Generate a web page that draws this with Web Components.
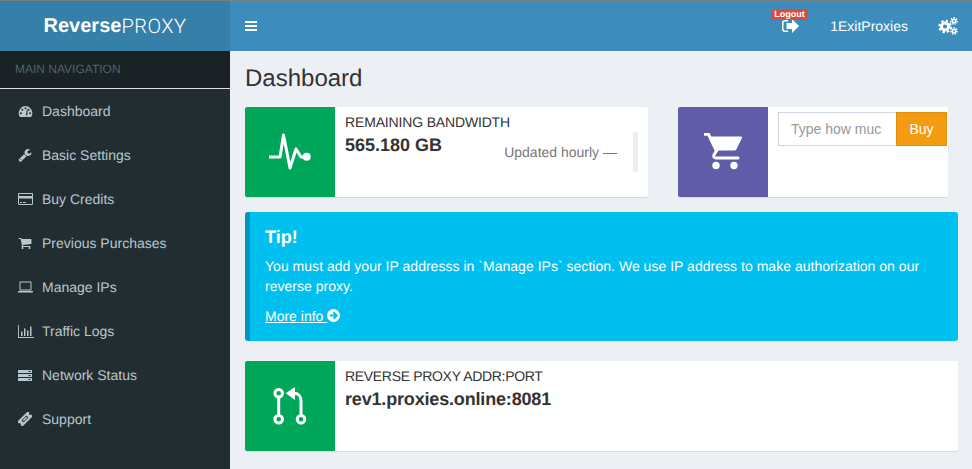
<!DOCTYPE html>
<html lang="en"><head><meta charset="utf-8"><title>ReverseProxy</title>
<style>
html,body{margin:0;height:100%;overflow:hidden;background:#ecf0f5}
body{font:14px/20px "Liberation Sans",Arial,sans-serif;color:#333;text-rendering:geometricPrecision}
</style></head><body>
<x-app>
  <x-top slot="top"></x-top>
  <x-sidebar slot="side">
    <x-nav icon="dashboard">Dashboard</x-nav>
    <x-nav icon="wrench">Basic Settings</x-nav>
    <x-nav icon="card">Buy Credits</x-nav>
    <x-nav icon="cart">Previous Purchases</x-nav>
    <x-nav icon="laptop">Manage IPs</x-nav>
    <x-nav icon="bars">Traffic Logs</x-nav>
    <x-nav icon="server">Network Status</x-nav>
    <x-nav icon="ticket">Support</x-nav>
  </x-sidebar>
  <x-dash></x-dash>
</x-app>
<script>
const ICONS={
dashboard:`<svg viewBox="0 0 16 14" width="15" height="13"><path fill="currentColor" fill-rule="evenodd" d="M8 1.200a7.400 7.400 0 0 0-7.400 7.400c0 1.500.4 2.900 1.200 4 .2.200.4.400.7.400h11c.3 0 .5-.2.7-.4.8-1.100 1.200-2.500 1.200-4A7.400 7.400 0 0 0 8 1.200ZM3 10a1.100 1.100 0 1 1 0-2.200A1.100 1.100 0 0 1 3 10Zm1.600-3.700a1.100 1.100 0 1 1 0-2.200 1.100 1.100 0 0 1 0 2.200ZM8 4.600a1.100 1.100 0 1 1 0-2.200 1.100 1.100 0 0 1 0 2.200Zm2 6.200-1.400.4-.1-.1.900-5.400.7-.9.3.2-.1 1.100Zm1.400-4.500a1.100 1.100 0 1 1 0-2.200 1.100 1.100 0 0 1 0 2.200Zm1.600 3.700a1.100 1.100 0 1 1 0-2.200 1.100 1.100 0 0 1 0 2.200Z"/></svg>`,
wrench:`<svg viewBox="0 0 1792 1792" width="14" height="14"><path fill="currentColor" d="M448 1472q0-26-19-45t-45-19-45 19-19 45 19 45 45 19 45-19 19-45zm644-420l-682 682q-37 37-90 37-52 0-91-37l-106-108q-38-36-38-90 0-53 38-91l681-681q39 98 114.500 173.500t173.500 114.500zm634-435q0 39-23 106-47 134-164.500 217.500t-258.500 83.500q-185 0-316.500-131.500t-131.500-316.500 131.500-316.500 316.500-131.500q58 0 121.500 16.500t107.500 46.500q16 11 16 28t-16 28l-293 169v224l193 107q5-3 79-48.500t135.500-81 70.500-35.500q15 0 23.500 10t8.500 25z"/></svg>`,
card:`<svg viewBox="0 0 15 12" width="15" height="12"><path fill="currentColor" fill-rule="evenodd" d="M1.200 0h12.600c.7 0 1.200.5 1.200 1.200v9.600c0 .7-.5 1.200-1.200 1.200H1.200C.5 12 0 11.500 0 10.800V1.200C0 .5.500 0 1.200 0ZM1 1.200V3h13V1.200c0-.1-.1-.2-.2-.2H1.200c-.1 0-.2.100-.2.200ZM1 5.500v5.300c0 .1.100.2.200.2h12.600c.1 0 .2-.1.200-.2V5.500ZM2 9h2v1H2Zm3 0h3v1H5Z"/></svg>`,
cart:`<svg viewBox="0 0 1792 1792" width="14" height="14"><path fill="currentColor" d="M704 1536q0 52-38 90t-90 38-90-38-38-90 38-90 90-38 90 38 38 90zm896 0q0 52-38 90t-90 38-90-38-38-90 38-90 90-38 90 38 38 90zm128-1088v512q0 24-16.500 42.500t-40.500 21.500l-1044 122q13 60 13 70 0 16-24 64h920q26 0 45 19t19 45-19 45-45 19h-1024q-26 0-45-19t-19-45q0-11 8-31.500t16-36 21.500-40 15.500-29.500l-177-823h-204q-26 0-45-19t-19-45 19-45 45-19h256q16 0 28.500 6.500t19.500 15.500 13 24.500 8 26 5.500 29.500 4.500 26h1201q26 0 45 19t19 45z"/></svg>`,
laptop:`<svg viewBox="0 0 15 12" width="15" height="12"><path fill="currentColor" fill-rule="evenodd" d="M2.500 0.500h10c.6 0 1 .4 1 1v7c0 .6-.4 1-1 1h-10c-.6 0-1-.4-1-1v-7c0-.6.400-1 1-1Zm0 1v7h10v-7ZM0 10h15v.7c0 .5-.4.800-.8.800H.8c-.4 0-.8-.3-.8-.8Z"/></svg>`,
bars:`<svg viewBox="0 0 16 13" width="16" height="13"><path fill="currentColor" d="M0 0h.9v12h15.100v1H0ZM3 6.500h1.500V11H3Zm3-3h1.500V11H6ZM9 5.500h1.500V11H9Zm3-4h1.500V11H12Z"/></svg>`,
server:`<svg viewBox="0 0 14 11" width="14" height="11"><path fill="currentColor" fill-rule="evenodd" d="M0 0h14v3H0Zm0 4h14v3H0Zm0 4h14v3H0ZM10.500 1v1h2V1Zm0 4v1h2V5Zm0 4v1h2V9Z"/></svg>`,
ticket:`<svg viewBox="0 0 14 14" width="14" height="14"><g transform="rotate(-45 7 7)"><path fill="currentColor" fill-rule="evenodd" d="M-.5 3.500h15v2.200a1.300 1.300 0 0 0 0 2.600v2.200h-15V8.300a1.300 1.300 0 0 0 0-2.600ZM3.500 5.500v3h7v-3Z"/><rect x="4.500" y="6.200" width="5" height="1.600" fill="currentColor"/></g></svg>`
};
function def(name,html,init){customElements.define(name,class extends HTMLElement{constructor(){super();this.attachShadow({mode:"open"}).innerHTML=html;if(init)init(this)}})}

def("x-app",`<style>
:host{display:grid;grid-template-columns:230px 742px;grid-template-rows:51px 418px;width:972px;height:469px}
::slotted([slot=top]){grid-column:1/3}
</style><slot name="top"></slot><slot name="side"></slot><slot></slot>`);

def("x-top",`<style>
:host{display:flex;height:51px;box-sizing:border-box;border-top:1px solid #7a7f82;background:#3c8dbc;color:#fff}
.logo{width:230px;background:#367fa9;display:flex;align-items:center;justify-content:center;font-size:20px;box-sizing:border-box}
.logo b{font-weight:700}.logo span{font-family:Roboto,"Liberation Sans",sans-serif;font-weight:300;letter-spacing:.5px}
.toggle{display:flex;align-items:center;padding-left:15px;flex:1}
.right{display:flex;align-items:center}
.out{position:relative;display:flex;margin-right:31px}
.badge{position:absolute;left:-11px;top:-10px;background:#dd4b39;color:#fff;font-size:9px;font-weight:700;line-height:11px;padding:0 3px;border-radius:2px;white-space:nowrap}
.user{margin-right:30px}
.cog{display:flex;margin-right:14px}
svg{display:block}
</style>
<div class="logo"><b>Reverse</b><span>PROXY</span></div>
<div class="toggle"><svg width="12" height="10" viewBox="0 0 12 10"><path fill="#fff" d="M0 0h12v2H0Zm0 4h12v2H0Zm0 4h12v2H0Z"/></svg></div>
<div class="right">
 <div class="out"><svg width="17" height="14" viewBox="0 0 17 14"><path fill="#fff" d="M6 1H3C1.300 1 0 2.300 0 4v6c0 1.700 1.300 3 3 3h3v-1.500H3c-.8 0-1.500-.7-1.500-1.500V4c0-.8.700-1.500 1.500-1.500h3ZM10 0l7 7-7 7v-4H4.500V4H10Z"/></svg><span class="badge">Logout</span></div>
 <div class="user">1ExitProxies</div>
 <div class="cog"><svg width="20" height="18" viewBox="0 0 20 18"><g fill="none" stroke="#fff"><circle cx="7" cy="9.500" r="3.600" stroke-width="3"/><circle cx="7" cy="9.500" r="5.600" stroke-width="2.400" stroke-dasharray="2.200 2.200"/><circle cx="16" cy="4" r="1.700" stroke-width="1.600"/><circle cx="16" cy="4" r="3.200" stroke-width="1.400" stroke-dasharray="1.500 1.300"/><circle cx="16" cy="14" r="1.700" stroke-width="1.600"/><circle cx="16" cy="14" r="3.200" stroke-width="1.400" stroke-dasharray="1.500 1.300"/></g></svg></div>
</div>`);

def("x-sidebar",`<style>
:host{display:block;background:#222d32;height:418px}
.head{height:37px;box-sizing:border-box;background:#1a2226;color:#4b646f;font-size:12px;line-height:36px;padding-left:15px}
.rule{height:1px;background:#dfe3e6}
</style><div class="head">MAIN NAVIGATION</div><div class="rule"></div><slot></slot>`);

def("x-nav",`<style>
:host{display:flex;align-items:center;height:44px;padding-left:18px;color:#b8c7ce}
.i{width:24px;display:flex;align-items:center;flex:none}
svg{display:block}
</style><span class="i"></span><slot></slot>`,el=>{queueMicrotask(()=>{el.shadowRoot.querySelector(".i").innerHTML=ICONS[el.getAttribute("icon")]||""})});

def("x-info",`<style>
:host{display:flex;height:90px;background:#fff;border-radius:2px;box-shadow:0 1px 1px rgba(0,0,0,.1);overflow:hidden}
.ic{width:90px;flex:none;display:flex;align-items:center;justify-content:center;background:var(--c,#00a65a);color:#fff}
.body{flex:1;padding:5px 10px;min-width:0}
</style><div class="ic"><slot name="icon"></slot></div><div class="body"><slot></slot></div>`);

def("x-callout",`<style>
:host{display:block;background:#00c0ef;border-left:5px solid #0097bc;border-radius:3px;padding:15px 30px 15px 15px;color:#fff}
</style><slot></slot>`);

def("x-dash",`<style>
:host{display:block;padding:16px 14px 0 15px;background:#ecf0f5;font-size:14px;line-height:20px}
h1{margin:0 0 16px;font-size:24px;line-height:24px;font-weight:400;color:#333}
.row{display:grid;grid-template-columns:403px 270px;column-gap:30px;margin-bottom:15px}
.t{display:block;letter-spacing:-.16px}
.t.w{letter-spacing:-.32px}
.n{font-size:18px;font-weight:700;line-height:26px;display:block}
.n.w{letter-spacing:-.17px}
.flow{display:flex;justify-content:space-between;align-items:flex-start}
.q{margin:0;padding:10px 16px 10px 15px;border-right:5px solid #eee;color:#777;height:20px}
.buy{display:flex;height:34px}
input{flex:none;box-sizing:border-box;width:118px;height:34px;border:1px solid #d2d6de;border-right:0;padding:6px 14px 6px 12px;font:14px/20px "Liberation Sans",Arial,sans-serif;outline:0;border-radius:0;background:#fff;color:#555}
input::placeholder{color:#999;opacity:1}
button{flex:none;box-sizing:border-box;width:51px;height:34px;border:1px solid #e08e0b;background:#f39c12;color:#fff;font:14px/20px "Liberation Sans",Arial,sans-serif;padding:0;border-radius:0}
h4{margin:0 0 9px;font-size:18px;line-height:20px;font-weight:700}
p{margin:0 0 10px;letter-spacing:.025px}
a{color:#fff;text-decoration:underline}
.arr{display:inline-block;vertical-align:-1px}
x-callout{margin-bottom:20px}
svg{display:block}
</style>
<h1>Dashboard</h1>
<div class="row">
 <x-info>
  <svg slot="icon" width="42" height="38" viewBox="0 0 42 38"><path d="M0 24H11L14.500 2 21 35 27 16 32 24H37" fill="none" stroke="#fff" stroke-width="3" stroke-linejoin="round"/><circle cx="37.700" cy="23.700" r="4" fill="#fff"/></svg>
  <span class="t">REMAINING BANDWIDTH</span>
  <div class="flow"><span class="n">565.180 GB</span><div class="q">Updated hourly —</div></div>
 </x-info>
 <x-info style="--c:#605ca8">
  <svg slot="icon" width="38" height="38" viewBox="0 0 38 38"><path fill="#fff" d="M5.500 3.500H37Q38.500 3.500 38 5L32.500 16Q32 17.500 30.500 17.500H12.500Z"/><path d="M1 1.300H4.500L12.500 18M13 17 10 22Q9 25 12 25H34" fill="none" stroke="#fff" stroke-width="3" stroke-linecap="round"/><circle cx="12" cy="32.500" r="3.700" fill="#fff"/><circle cx="30" cy="32.500" r="3.700" fill="#fff"/></svg>
  <div class="buy"><input type="text" placeholder="Type how much you want"><button>Buy</button></div>
 </x-info>
</div>
<x-callout>
 <h4>Tip!</h4>
 <p>You must add your IP addresss in \`Manage IPs\` section. We use IP address to make authorization on our reverse proxy.</p>
 <a href="#">More info <svg class="arr" style="display:inline-block" width="13" height="13" viewBox="0 0 13 13"><circle cx="6.500" cy="6.500" r="6.500" fill="#fff"/><path d="M3 6.500h6M6.500 3.200l3.200 3.300-3.200 3.300" fill="none" stroke="#00c0ef" stroke-width="2"/></svg></a>
</x-callout>
<x-info>
 <svg slot="icon" width="34" height="38" viewBox="0 0 34 38"><g fill="none" stroke="#fff" stroke-width="3"><circle cx="5.700" cy="6.300" r="3.800"/><circle cx="5.700" cy="32.300" r="3.800"/><circle cx="28" cy="32.300" r="3.800"/><path d="M5.700 10V28.500M28 28.500V14C28 9 25 6.300 21 6.300H19"/></g><path fill="#fff" d="M12.700 6.300 22 0V13Z"/></svg>
 <span class="t w">REVERSE PROXY ADDR:PORT</span>
 <span class="n w">rev1.proxies.online:8081</span>
</x-info>`);
</script>
</body></html>
